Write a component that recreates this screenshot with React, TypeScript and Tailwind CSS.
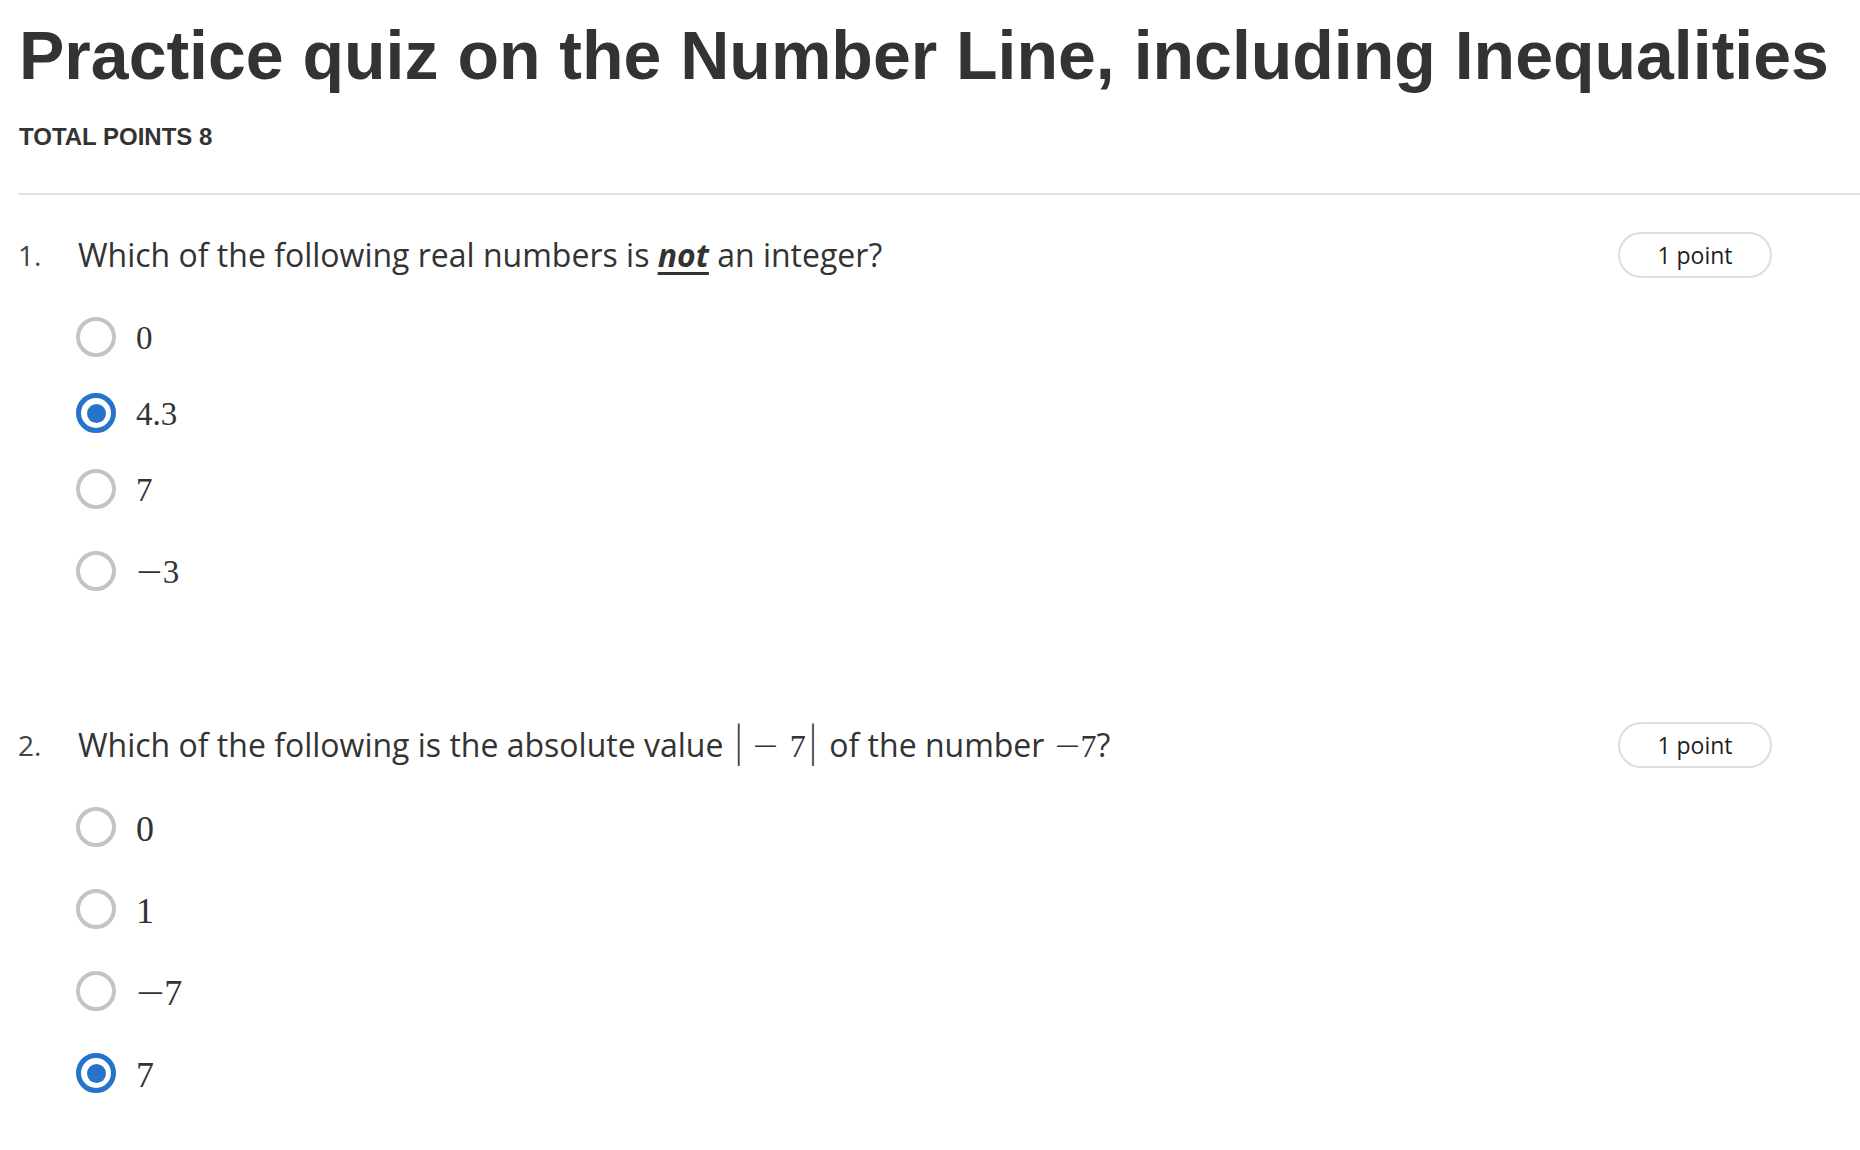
import React from 'react';

type Option = { minus?: boolean; label: string; selected?: boolean; gap: string; size: string };

const q1Options: Option[] = [
  { label: '0', gap: 'mt-[39px]', size: 'text-[33px] mt-[3px]' },
  { label: '4.3', selected: true, gap: 'mt-[36px]', size: 'text-[33px] mt-[3px]' },
  { label: '7', gap: 'mt-[36px]', size: 'text-[33px] mt-[3px]' },
  { minus: true, label: '3', gap: 'mt-[42px]', size: 'text-[33px] mt-[3px]' },
];

const q2Options: Option[] = [
  { label: '0', gap: 'mt-[39px]', size: 'text-[36px] mt-[4px]' },
  { label: '1', gap: 'mt-[42px]', size: 'text-[36px] mt-[4px]' },
  { minus: true, label: '7', gap: 'mt-[42px]', size: 'text-[36px] mt-[4px]' },
  { label: '7', selected: true, gap: 'mt-[42px]', size: 'text-[36px] mt-[4px]' },
];

const serif = "font-['Liberation_Serif',serif]";

function Radio({ selected }: { selected?: boolean }) {
  if (selected) {
    return (
      <span className="w-10 h-10 rounded-full border-[5px] border-[#2673cc] flex items-center justify-center shrink-0">
        <span className="w-[19px] h-[19px] rounded-full bg-[#2673cc]" />
      </span>
    );
  }
  return <span className="w-10 h-10 rounded-full border-4 border-[#c4c4c4] shrink-0" />;
}

// math minus is wider than the serif one
function Minus() {
  return <span className="inline-block scale-x-[1.4] mx-[4px]">{'\u2212'}</span>;
}

function Options({ options }: { options: Option[] }) {
  return (
    <div className="ml-[60px]">
      {options.map((o, i) => (
        <div key={i} className={`flex items-center h-10 ${o.gap}`}>
          <Radio selected={o.selected} />
          <span className={`ml-5 leading-none text-[#333] ${serif} ${o.size}`}>
            {o.minus && <Minus />}
            {o.label}
          </span>
        </div>
      ))}
    </div>
  );
}

function QuestionRow({ num, children }: { num: string; children: React.ReactNode }) {
  return (
    <div className="flex items-center h-[46px] pr-[88px]">
      <span className="w-[62px] shrink-0 pl-[2px] text-[28px] text-[#444] leading-none">{num}</span>
      <div className="text-[32px] text-[#333] leading-none whitespace-nowrap">{children}</div>
      <span className="ml-auto w-[154px] h-[46px] rounded-full border-2 border-[#dedede] flex items-center justify-center text-[23px] text-[#1f1f1f]">
        1 point
      </span>
    </div>
  );
}

function Bar() {
  return <span className={`inline-block ${serif} font-light scale-y-[1.45] -translate-y-[6px]`}>|</span>;
}

export default function App() {
  return (
    <div className="min-h-screen bg-white pl-4 font-['Open_Sans',sans-serif]">
      <h1 className="pt-[21px] pl-[3px] text-[68px] leading-none font-bold text-[#333] font-['Liberation_Sans',Arial,sans-serif] whitespace-nowrap">
        Practice quiz on the Number Line, including Inequalities
      </h1>
      <div className="mt-[36px] pl-[3px] text-[24px] leading-none font-bold text-[#333] font-['Liberation_Sans',Arial,sans-serif]">
        TOTAL POINTS 8
      </div>
      <div className="mt-[44px] ml-[2px] h-[2px] bg-[#e1e1e1]" />

      <div className="mt-[37px]">
        <QuestionRow num="1.">
          Which of the following real numbers is{' '}
          <span className="font-bold italic underline underline-offset-[5px] decoration-[3px]">not</span> an integer?
        </QuestionRow>
        <Options options={q1Options} />
      </div>

      <div className="mt-[131px] pb-10">
        <QuestionRow num="2.">
          Which of the following is the absolute value
          <span className="ml-[12px]"><Bar /></span>
          <span className={`ml-[10px] ${serif}`}>
            <Minus />
            <span className="ml-[12px]">7</span>
          </span>
          <span className="ml-[4px]"><Bar /></span>
          <span className="ml-[13px]">of the number</span>
          <span className={`ml-[10px] ${serif}`}>
            <Minus />7
          </span>
          ?
        </QuestionRow>
        <Options options={q2Options} />
      </div>
    </div>
  );
}
